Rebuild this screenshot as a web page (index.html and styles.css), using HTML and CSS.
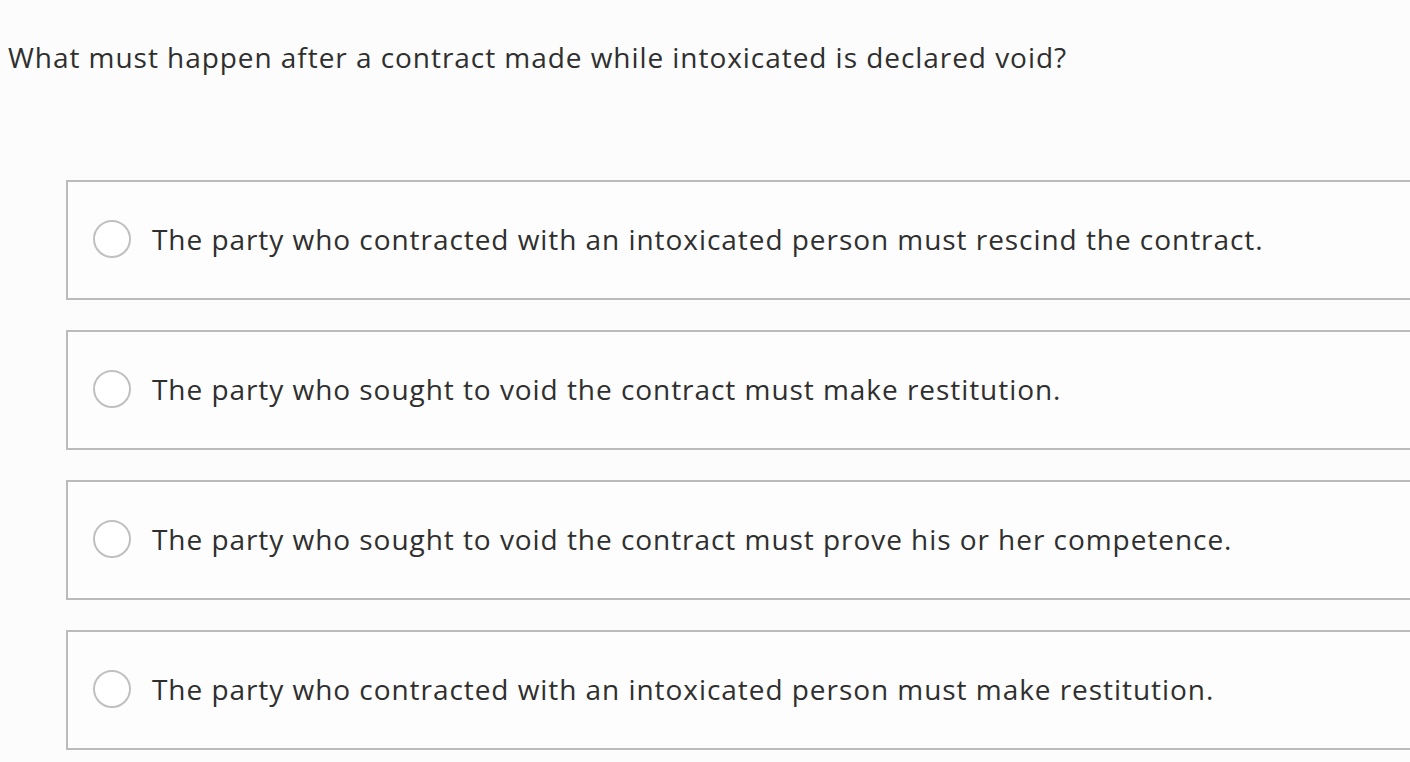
FILE: index.html
```html
<!DOCTYPE html>
<html>
<head>
<meta charset="utf-8">
<link rel="stylesheet" href="styles.css">
</head>
<body>
<div class="quiz">
  <p class="question">What must happen after a contract made while intoxicated is declared void?</p>
  <ul class="options">
    <li class="option"><span class="radio"></span><span class="label">The party who contracted with an intoxicated person must rescind the contract.</span></li>
    <li class="option"><span class="radio"></span><span class="label">The party who sought to void the contract must make restitution.</span></li>
    <li class="option"><span class="radio"></span><span class="label">The party who sought to void the contract must prove his or her competence.</span></li>
    <li class="option"><span class="radio"></span><span class="label">The party who contracted with an intoxicated person must make restitution.</span></li>
  </ul>
</div>
</body>
</html>
```
FILE: styles.css
```css
html, body {
  margin: 0;
  padding: 0;
  background: #fcfcfc;
}
body {
  font-family: "Open Sans", "Liberation Sans", sans-serif;
  color: #2f2f2f;
  overflow: hidden;
}
.quiz {
  padding: 0 0 0 8px;
}
.question {
  margin: 0;
  padding-top: 37px;
  font-size: 28px;
  letter-spacing: 0.95px;
  line-height: 40px;
  height: 143px;
}
.options {
  list-style: none;
  margin: 0 0 0 58px;
  padding: 0;
  display: flex;
  flex-direction: column;
  gap: 30px;
}
.option {
  box-sizing: border-box;
  height: 120px;
  width: 1400px;
  border: 2px solid #bbbbbb;
  display: flex;
  align-items: center;
  padding-left: 25px;
  background: #fdfdfd;
}
.radio {
  box-sizing: border-box;
  width: 38px;
  height: 38px;
  border: 2px solid #c0c0c0;
  border-radius: 50%;
  background: #ffffff;
  flex: none;
  margin-right: 21px;
  margin-top: -3px;
}
.label {
  font-size: 28px;
  letter-spacing: 0.95px;
  line-height: 40px;
  margin-bottom: 2px;
}
```
